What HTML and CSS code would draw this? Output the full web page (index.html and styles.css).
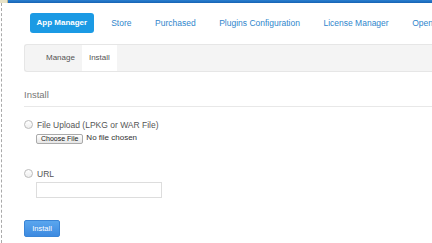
FILE: index.html
```html
<!DOCTYPE html>
<html lang="en">
<head>
    <meta charset="UTF-8">
    <title>App Manager - Install</title>
    <link rel="stylesheet" href="styles.css">
</head>
<body>

    <div class="topbar">
        <span class="corner"></span>
    </div>

    <div class="page">
        <!-- Main tabs -->
        <ul class="nav">
            <li class="active">App Manager</li>
            <li>Store</li>
            <li>Purchased</li>
            <li>Plugins Configuration</li>
            <li>License Manager</li>
            <li>Open</li>
        </ul>

        <!-- Sub tabs -->
        <ul class="subnav">
            <li>Manage</li>
            <li class="active">Install</li>
        </ul>

        <h2 class="legend">Install</h2>

        <div class="option">
            <label class="radio"><span class="dot"></span>File Upload (LPKG or WAR File)</label>
            <div class="file-row">
                <button class="file-btn">Choose File</button>
                <span class="file-name">No file chosen</span>
            </div>
        </div>

        <div class="option url">
            <label class="radio"><span class="dot"></span>URL</label>
            <input type="text" class="url-input">
        </div>

        <button class="install-btn">Install</button>
    </div>

</body>
</html>
```

FILE: styles.css
```css
body {
    margin: 0;
    background-color: #fff;
    font-family: 'Liberation Sans', Arial, sans-serif;
    color: #444;
}
.topbar {
    height: 3px;
    background: linear-gradient(#2a7fd0, #1763b4);
    display: flex;
}
.corner {
    width: 7px;
    height: 3px;
    background-color: #e8e3c8;
    border-right: 1px solid #bdb78f;
}
.page {
    margin-left: 1px;
    padding: 10px 0 0 22px;
    border-left: 1px dashed #aaa;
    height: 230px;
}
.nav {
    list-style: none;
    margin: 0 0 0 6px;
    padding: 0;
    display: flex;
    gap: 11.5px;
    white-space: nowrap;
}
.nav li {
    height: 20px;
    line-height: 20px;
    padding: 0 6px;
    font-size: 8.5px;
    color: #2f86cc;
    border-radius: 3px;
}
.nav li.active {
    background-color: #1b9ae4;
    color: #fff;
    font-weight: bold;
    font-size: 8px;
    padding: 0 6.5px;
}
.subnav {
    list-style: none;
    margin: 11px 0 0 0;
    padding: 0 0 0 14px;
    height: 26px;
    display: flex;
    background-color: #f4f4f4;
    border: 1px solid #e6e6e6;
    border-right: none;
    border-radius: 3px 0 0 3px;
}
.subnav li {
    padding: 0 7px;
    line-height: 26px;
    font-size: 8px;
    color: #555;
}
.subnav li.active {
    background-color: #fff;
}
.legend {
    margin: 17px 0 0 0;
    padding-bottom: 6px;
    font-size: 9.5px;
    font-weight: normal;
    color: #777;
    border-bottom: 1px solid #e8e8e8;
}
.option {
    margin-top: 13px;
}
.radio {
    display: flex;
    align-items: center;
    font-size: 8.5px;
    color: #555;
    height: 9px;
}
.dot {
    width: 7px;
    height: 7px;
    border: 1px solid #bbb;
    border-radius: 50%;
    background: linear-gradient(#fff, #eee);
    margin-right: 4px;
}
.file-row {
    display: flex;
    align-items: flex-start;
    margin: 5px 0 0 12px;
}
.file-btn {
    height: 10px;
    padding: 0 4px;
    font-family: inherit;
    font-size: 7px;
    color: #222;
    background: linear-gradient(#fff, #e6e6e6);
    border: 1px solid #aaa;
    border-radius: 2px;
    line-height: 8px;
}
.file-name {
    font-size: 8px;
    color: #333;
    margin-left: 3px;
    margin-top: -1px;
}
.url {
    margin-top: 25px;
}
.url-input {
    display: block;
    box-sizing: border-box;
    width: 126px;
    height: 16px;
    margin: 4px 0 0 12px;
    border: 1px solid #ddd;
    padding: 0;
}
.install-btn {
    display: block;
    margin-top: 22px;
    width: 36px;
    height: 17px;
    padding: 0;
    font-family: inherit;
    font-size: 7.5px;
    color: #fff;
    background: linear-gradient(#5aa6ee, #3d8ae0);
    border: 1px solid #3a85d6;
    border-radius: 2px;
}
```
